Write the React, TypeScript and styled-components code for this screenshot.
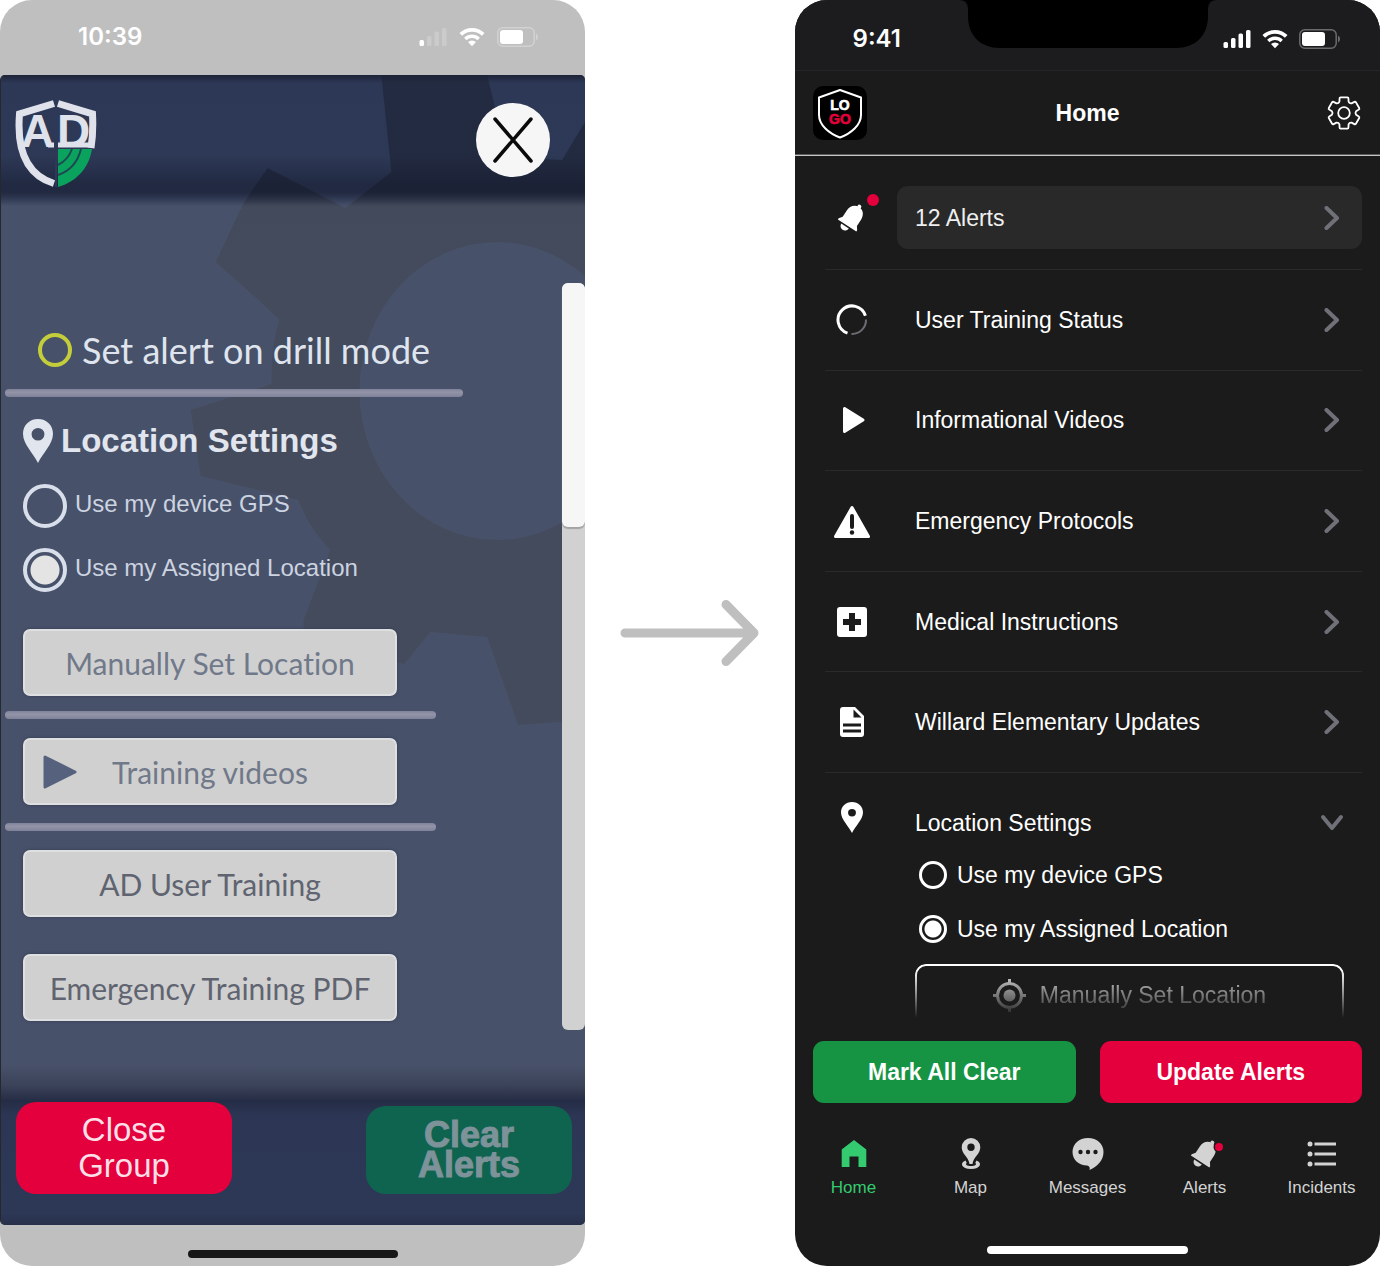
import React, { useId, useState } from 'react';
import styled, { createGlobalStyle, css } from 'styled-components';

const sans = '"Liberation Sans", Arial, Helvetica, sans-serif';
const geometric = 'Lato, "Liberation Sans", sans-serif';
const system = 'Inter, Roboto, sans-serif';

const GlobalStyle = createGlobalStyle`
  *, *::before, *::after { box-sizing: border-box; }
  body { margin: 0; background: #fff; font-family: ${sans}; }
  button, input { font: inherit; margin: 0; }
  button { border: 0; padding: 0; background: none; color: inherit; cursor: pointer; }
  svg { display: block; flex: none; }
`;

/* ---------- shared ---------- */

const Page = styled.main`
  display: grid;
  grid-template-columns: minmax(0, 1fr) 210px minmax(0, 1fr);
  min-height: 100vh;
`;

const ArrowColumn = styled.div`
  display: flex;
  align-items: center;
  justify-content: center;
`;

const Phone = styled.section<{ $bg: string; $fg: string }>`
  display: flex;
  flex-direction: column;
  overflow: hidden;
  border-radius: 32px;
  background: ${p => p.$bg};
  color: ${p => p.$fg};
`;

const Clock = styled.time`
  font: 600 24px/28px ${system};
`;

const StatusIcons = styled.div<{ $gap: number }>`
  display: flex;
  align-items: center;
  gap: ${p => p.$gap}px;
`;

const HomeIndicator = styled.div<{ $color: string; $width: number }>`
  width: ${p => p.$width}px;
  height: 8px;
  border-radius: 4px;
  background: ${p => p.$color};
  align-self: center;
`;

const Signal = ({ dim = 1 }: { dim?: number }) => (
  <svg width="28" height="20" viewBox="0 0 28 20" fill="#fff">
    <rect x="0.500" y="13" width="4.500" height="6" rx="1.500" />
    <rect x="8" y="9" width="4.500" height="10" rx="1.500" opacity={dim} />
    <rect x="15.500" y="4.500" width="4.500" height="14.500" rx="1.500" opacity={dim} />
    <rect x="23" y="1" width="4.500" height="18" rx="1.500" opacity={dim} />
  </svg>
);

const Wifi = () => (
  <svg width="26" height="20" viewBox="0 0 26 20" fill="none" stroke="#fff">
    <path d="M1.8 7.400a16 16 0 0 1 22.400 0" strokeWidth="3.800" />
    <path d="M6.300 12a9.600 9.600 0 0 1 13.400 0" strokeWidth="3.400" />
    <path d="M13 19.200l-4-4.200a5.800 5.800 0 0 1 8 0z" fill="#fff" stroke="none" />
  </svg>
);

const Battery = ({ edge }: { edge: string }) => (
  <svg width="42" height="20" viewBox="0 0 42 20">
    <rect x="0.800" y="0.800" width="36.400" height="18.400" rx="5" fill="none" stroke={edge} strokeWidth="1.500" />
    <rect x="3" y="3" width="23" height="14" rx="3" fill="#fff" />
    <path d="M39 6.500v7a4 4 0 0 0 0-7z" fill={edge} />
  </svg>
);

/* ---------- first phone ---------- */

const OldStatus = styled.header`
  display: flex;
  align-items: center;
  justify-content: space-between;
  height: 75px;
  padding: 0 46px 2px 78px;
`;

const OldScreen = styled.div`
  position: relative;
  display: flex;
  flex: 1;
  flex-direction: column;
  overflow: hidden;
  border-left: 1px solid #26282f;
  border-radius: 5px;
  background: #475169;
  isolation: isolate;
`;

const Backdrop = styled.svg`
  position: absolute;
  inset: 0;
  z-index: -1;
  width: 100%;
  height: 100%;
`;

const OldHeader = styled.header`
  display: flex;
  align-items: flex-start;
  justify-content: space-between;
  height: 130px;
  padding: 24px 35px 0 14px;
  background: linear-gradient(rgba(28, 34, 52, 0.9), rgba(28, 34, 52, 0) 8px, rgba(20, 26, 44, 0) 80px, rgba(20, 26, 44, 0.5) 110px, rgba(20, 26, 44, 0.5) 118px, rgba(20, 26, 44, 0) 130px);
`;

const CloseButton = styled.button`
  display: grid;
  place-items: center;
  width: 74px;
  height: 74px;
  margin-top: 4px;
  border-radius: 50%;
  background: #f6f6f6;
`;

const OldBody = styled.div`
  display: flex;
  flex: 1;
  align-items: flex-start;
  justify-content: space-between;
  padding-top: 78px;
`;

const OldContent = styled.div`
  display: flex;
  flex: 1;
  flex-direction: column;
  padding: 46px 24px 0 4px;
`;

const DrillOption = styled.label`
  display: flex;
  align-items: center;
  gap: 10px;
  height: 42px;
  padding-left: 33px;
  color: #dfe4ee;
  font: 400 36px/42px ${geometric};
  font-variant-ligatures: none;
`;

const DrillBox = styled.input`
  appearance: none;
  width: 34px;
  height: 34px;
  margin: 0;
  border: 4px solid #c3ce3a;
  border-radius: 50%;
`;

const OldRule = styled.hr<{ $width: number; $gap: number }>`
  width: ${p => p.$width}px;
  max-width: 100%;
  height: 8px;
  margin: ${p => p.$gap}px 0 0;
  border: 0;
  border-radius: 4px;
  background: linear-gradient(#7f829a, #9394a8 40%, #80829a);
`;

const OldHeading = styled.h2`
  display: flex;
  align-items: center;
  gap: 8px;
  height: 44px;
  margin: 22px 0 0;
  padding-left: 18px;
  color: #e1e5ee;
  font: 700 33px/44px ${sans};
`;

const OldRadios = styled.div`
  display: flex;
  flex-direction: column;
  gap: 20px;
  margin: 21px 0 37px;
  padding-left: 18px;
`;

const OldRadioLabel = styled.label`
  display: flex;
  align-items: flex-start;
  gap: 8px;
  color: #ccd3e1;
  font: 400 24px/40px ${sans};
`;

const OldRadio = styled.input`
  appearance: none;
  width: 44px;
  height: 44px;
  margin: 0;
  border: 4px solid #d8deea;
  border-radius: 50%;
  &:checked {
    background: radial-gradient(circle, #e4e4e4 14px, transparent 15px);
  }
`;

const OldButton = styled.button<{ $gap?: number; $dark?: boolean; $icon?: boolean }>`
  display: grid;
  grid-template-columns: ${p => (p.$icon ? '34px 1fr 34px' : '1fr')};
  align-items: center;
  justify-items: center;
  width: 374px;
  max-width: 100%;
  height: 67px;
  margin: ${p => p.$gap ?? 0}px 0 0 18px;
  padding: 0 18px;
  border: 2px solid #dedfe0;
  border-radius: 7px;
  background: #d0d0d0;
  box-shadow: 0 0 3px #333b50;
  color: ${p => (p.$dark ? '#5f6470' : '#70798a')};
  font: 400 30px/36px ${geometric};
  font-variant-ligatures: none;
  white-space: nowrap;
`;

const ScrollTrack = styled.div`
  width: 23px;
  height: 747px;
  border-radius: 6px;
  background: #d1d1d2;
`;

const ScrollThumb = styled.div`
  height: 244px;
  border-radius: 6px;
  background: #f6f6f7;
  box-shadow: 0 2px 1px #a3a3a6;
`;

const OldFooter = styled.footer`
  display: flex;
  align-items: flex-end;
  justify-content: space-between;
  height: 160px;
  padding: 0 13px 31px 15px;
  background: linear-gradient(rgba(37, 44, 67, 0), #3b4359 20px, #252c45 36px, #2c3654 50px, #2d3857 148px, #272f49);
`;

const FooterButton = styled.button<{ $muted?: boolean }>`
  border-radius: 20px;
  color: #fcdfe7;
  width: 216px;
  height: 92px;
  background: #e4003c;
  font: 400 33px/36px ${sans};
  ${p =>
    p.$muted &&
    css`
      width: 206px;
      height: 88px;
      background: #0f6450;
      color: #7d9299;
      font: 700 36px/30px ${sans};
      -webkit-text-stroke: 1px #7d9299;
    `}
`;

const FooterLine = styled.span`
  display: block;
`;

const OldHomeArea = styled.div`
  display: flex;
  flex-direction: column;
  justify-content: center;
  height: 41px;
  padding-top: 16px;
`;

const GearBackdrop = () => (
  <Backdrop viewBox="0 75 585 1150" preserveAspectRatio="none" aria-hidden="true">
    <defs>
      <linearGradient id="headerTone" gradientUnits="userSpaceOnUse" x1="0" y1="75" x2="0" y2="275">
        <stop offset="0" stopColor="#2d3856" />
        <stop offset="0.580" stopColor="#2e3957" />
        <stop offset="0.660" stopColor="#475169" />
      </linearGradient>
      <linearGradient id="gearTone" gradientUnits="userSpaceOnUse" x1="0" y1="75" x2="0" y2="275">
        <stop offset="0" stopColor="#232b42" />
        <stop offset="0.580" stopColor="#222a40" />
        <stop offset="0.660" stopColor="#434a5b" />
        <stop offset="1" stopColor="#444b5d" />
      </linearGradient>
    </defs>
    <rect x="0" y="75" width="585" height="200" fill="url(#headerTone)" />
    <path
      fill="url(#gearTone)"
      d="M381 75H487L495 108 520 158 562 160 585 122V720L518 725 487 637 430 632 404 664 303 640 303 620 330 550Q308 528 298 500L200 476 190 410 271 384Q270 345 279 320L258 300 215 262 243 203 267 168 345 208 391 172Z"
    />
    <ellipse cx="497" cy="391" rx="138" ry="149" fill="#475169" />
  </Backdrop>
);

const ShieldLogo = () => (
  <svg width="82" height="90" viewBox="0 0 82 90" role="img" aria-label="AD">
    <path d="M43 50H77C74 68 63 82 43 88Z" fill="#0aa35e" />
    <path d="M43 66Q53 61 57 50M43 76Q61 70 66 50" fill="none" stroke="#1d4a52" strokeWidth="2" />
    <path d="M39 4.500 4.500 15C2 46 9 75 39 84.500" fill="none" stroke="#dfe2ea" strokeWidth="7" />
    <path d="M43 4.500 77.500 15Q78.500 34 76 49" fill="none" stroke="#dfe2ea" strokeWidth="7" />
    <path d="M39 46H33M43 46H77" fill="none" stroke="#dfe2ea" strokeWidth="5" />
    <g fill="#dfe2ea" fontFamily={sans} fontWeight="700" fontSize="46">
      <text x="6" y="48">A</text>
      <text x="42" y="48">D</text>
    </g>
    <path d="M41 1V88" stroke="#2e3957" strokeWidth="2" />
  </svg>
);

const PinShape = ({ width, height, fill, hole }: { width: number; height: number; fill: string; hole: number }) => (
  <svg width={width} height={height} viewBox="0 0 28 42" preserveAspectRatio="none" fill={fill} aria-hidden="true">
    <path
      fillRule="evenodd"
      d={`M14 0C6 0 0 6 0 14C0 24 10 33 14 42C18 33 28 24 28 14C28 6 22 0 14 0ZM${14 - hole} 14.500a${hole} ${hole} 0 1 1 ${hole * 2} 0a${hole} ${hole} 0 1 1 ${-hole * 2} 0Z`}
    />
  </svg>
);

function OldPhone() {
  const [place, setPlace] = useState('assigned');
  const group = useId();
  return (
    <Phone $bg="#bfbfbf" $fg="#fff">
      <OldStatus>
        <Clock>10:39</Clock>
        <StatusIcons $gap={12}>
          <Signal dim={0.2} />
          <Wifi />
          <Battery edge="#d2d2d2" />
        </StatusIcons>
      </OldStatus>
      <OldScreen>
        <GearBackdrop />
        <OldHeader>
          <ShieldLogo />
          <CloseButton aria-label="Close">
            <svg width="40" height="46" viewBox="0 0 40 46" stroke="#0b0b0b" strokeWidth="3.500" strokeLinecap="round">
              <path d="M2 2 38 44M38 2 2 44" />
            </svg>
          </CloseButton>
        </OldHeader>
        <OldBody>
          <OldContent>
            <DrillOption>
              <DrillBox type="checkbox" />
              Set alert on drill mode
            </DrillOption>
            <OldRule $width={458} $gap={18} />
            <OldHeading>
              <PinShape width={30} height={44} fill="#e1e5ee" hole={6} />
              Location Settings
            </OldHeading>
            <OldRadios>
              <OldRadioLabel>
                <OldRadio type="radio" name={group} checked={place === 'gps'} onChange={() => setPlace('gps')} />
                Use my device GPS
              </OldRadioLabel>
              <OldRadioLabel>
                <OldRadio type="radio" name={group} checked={place === 'assigned'} onChange={() => setPlace('assigned')} />
                Use my Assigned Location
              </OldRadioLabel>
            </OldRadios>
            <OldButton>Manually Set Location</OldButton>
            <OldRule $width={431} $gap={15} />
            <OldButton $gap={19} $icon>
              <svg width="34" height="34" viewBox="0 0 34 34" fill="#56627d" stroke="#56627d" strokeWidth="3" strokeLinejoin="round">
                <path d="M2 2 32 17 2 32Z" />
              </svg>
              Training videos
            </OldButton>
            <OldRule $width={431} $gap={18} />
            <OldButton $gap={19} $dark>AD User Training</OldButton>
            <OldButton $gap={37} $dark>Emergency Training PDF</OldButton>
          </OldContent>
          <ScrollTrack>
            <ScrollThumb />
          </ScrollTrack>
        </OldBody>
        <OldFooter>
          <FooterButton>
            <FooterLine>Close</FooterLine>
            <FooterLine>Group</FooterLine>
          </FooterButton>
          <FooterButton $muted>
            <FooterLine>Clear</FooterLine>
            <FooterLine>Alerts</FooterLine>
          </FooterButton>
        </OldFooter>
      </OldScreen>
      <OldHomeArea>
        <HomeIndicator $color="#161616" $width={210} />
      </OldHomeArea>
    </Phone>
  );
}

/* ---------- second phone ---------- */

const NewStatus = styled.header`
  display: grid;
  grid-template-columns: 1fr 258px 1fr;
  height: 71px;
  border-bottom: 1px solid #262628;
  background: #1c1c1e;
`;

const StatusSide = styled.div<{ $end?: boolean }>`
  display: flex;
  align-items: center;
  justify-content: ${p => (p.$end ? 'flex-end' : 'center')};
  height: 78px;
  padding-right: ${p => (p.$end ? 39 : 0)}px;
`;

const NewHeader = styled.header`
  display: grid;
  grid-template-columns: 54px 1fr 54px;
  align-items: center;
  height: 85px;
  padding: 0 18px;
  border-bottom: 1px solid #c6c6c6;
  box-shadow: inset 0 -1px #5c5c5c;
`;

const Title = styled.h1`
  margin: 0;
  text-align: center;
  font: 700 23px/28px ${sans};
`;

const IconButton = styled.button`
  justify-self: end;
`;

const NewMain = styled.div`
  display: flex;
  flex-direction: column;
  padding: 0 18px 0 30px;
`;

const IconCell = styled.span`
  position: relative;
  display: grid;
  place-items: center;
  flex: none;
  width: 54px;
  height: 32px;
`;

const AlertsRow = styled.div`
  display: flex;
  align-items: center;
  gap: 18px;
  padding: 30px 0 20px;
`;

const AlertDot = styled.span`
  position: absolute;
  top: -8px;
  right: 0;
  width: 12px;
  height: 12px;
  border-radius: 50%;
  background: #e4003c;
`;

const AlertsButton = styled.button`
  display: flex;
  flex: 1;
  align-items: center;
  justify-content: space-between;
  height: 63px;
  padding: 0 18px;
  border-radius: 11px;
  background: #292929;
  color: #efefef;
  font: 400 23px/28px ${sans};
`;

const MenuList = styled.ul`
  display: flex;
  flex-direction: column;
  min-height: 504px;
  margin: 0;
  padding: 0;
  list-style: none;
  border-top: 1px solid #2a2a2a;
`;

const MenuItem = styled.li`
  display: flex;
  flex: 1;
  border-bottom: 1px solid #2a2a2a;
`;

const MenuButton = styled.button`
  display: flex;
  flex: 1;
  align-items: center;
  gap: 36px;
  padding-right: 18px;
  text-align: left;
  font: 400 23px/44px ${sans};
`;

const MenuLabel = styled.span`
  flex: 1;
`;

const ChevronCell = styled.span`
  display: grid;
  place-items: center;
  width: 24px;
  height: 44px;
`;

const LocationToggle = styled(MenuButton)`
  flex: none;
  align-items: flex-start;
  padding-top: 28px;
`;

const LocationPanel = styled.div`
  display: flex;
  flex-direction: column;
  gap: 24px;
  padding: 15px 18px 0 90px;
`;

const RadioLabel = styled.label`
  display: flex;
  align-items: center;
  gap: 10px;
  padding-left: 4px;
  font: 400 23px/30px ${sans};
`;

const Radio = styled.input`
  appearance: none;
  width: 28px;
  height: 28px;
  margin: 0;
  border: 3px solid #fff;
  border-radius: 50%;
  &:checked {
    background: radial-gradient(circle, #fff 8px, transparent 9px);
  }
`;

const SetLocationButton = styled.button`
  display: flex;
  align-items: center;
  justify-content: center;
  gap: 14px;
  height: 62px;
  margin-top: -4px;
  border: 2px solid #fff;
  border-radius: 11px;
  color: #e0e0e0;
  font: 400 23px/28px ${sans};
  mask-image: linear-gradient(#000 6px, transparent 54px);
`;

const Actions = styled.div`
  display: grid;
  grid-template-columns: 1fr 1fr;
  gap: 24px;
  padding: 15px 18px 35px;
`;

const ActionButton = styled.button<{ $bg: string }>`
  height: 62px;
  border-radius: 11px;
  background: ${p => p.$bg};
  font: 700 23px/28px ${sans};
`;

const TabBar = styled.nav`
  display: grid;
  grid-template-columns: repeat(5, 1fr);
  padding-bottom: 48px;
`;

const Tab = styled.a<{ $active?: boolean }>`
  display: flex;
  flex-direction: column;
  align-items: center;
  gap: 8px;
  color: ${p => (p.$active ? '#34cb70' : '#d3d3d3')};
  font: 400 17px/20px ${sans};
  text-decoration: none;
`;

const NewHomeArea = styled.div`
  display: flex;
  flex-direction: column;
  padding-bottom: 12px;
`;

const Notch = () => (
  <svg width="258" height="48" viewBox="0 0 258 48" aria-hidden="true">
    <path d="M0 0H258Q249 0 249 9V16C249 36 236 48 217 48H41C22 48 9 36 9 16V9Q9 0 0 0Z" fill="#000" />
  </svg>
);

const AppLogo = () => (
  <svg width="54" height="54" viewBox="0 0 54 54">
    <rect width="54" height="54" rx="10" fill="#000" />
    <path d="M27 4 48 11.500V29C48 39 38 47.500 27 51.500C16 47.500 6 39 6 29V11.500Z" fill="none" stroke="#fff" strokeWidth="2" strokeLinejoin="round" />
    <g fontFamily={sans} fontWeight="700" fontSize="14" strokeWidth="0.600" textAnchor="middle">
      <text x="27" y="24" fill="#fff" stroke="#fff">LO</text>
      <text x="27" y="38" fill="#e4003c" stroke="#e4003c">GO</text>
    </g>
  </svg>
);

const gearPath = (() => {
  const at = (deg: number, r: number) => {
    const a = (deg * Math.PI) / 180;
    return `${(17 + r * Math.cos(a)).toFixed(2)} ${(17 + r * Math.sin(a)).toFixed(2)}`;
  };
  let d = '';
  for (let k = 0; k < 6; k += 1) {
    const c = -90 + k * 60;
    d += `${k ? 'L' : 'M'}${at(c - 22, 12.2)}L${at(c - 17, 15.2)}Q${at(c - 16, 16.2)} ${at(c - 12, 16)}L${at(c + 12, 16)}Q${at(c + 16, 16.2)} ${at(c + 17, 15.2)}L${at(c + 22, 12.2)}Q${at(c + 30, 10.8)} ${at(c + 38, 12.2)}`;
  }
  return `${d}Z`;
})();

const GearIcon = () => (
  <svg width="36" height="34" viewBox="-1 0 36 34" fill="none" stroke="#fff" strokeWidth="1.800" strokeLinejoin="round">
    <path d={gearPath} />
    <circle cx="17" cy="17" r="5.800" />
  </svg>
);

const BellShape = ({ fill }: { fill: string }) => (
  <g transform="rotate(33 16 16)" fill={fill}>
    <circle cx="16" cy="2.500" r="2" />
    <path d="M16 3C10.500 3 7.500 7.500 7.500 12.500V20L5 23.500V25H27V23.500L24.500 20V12.500C24.500 7.500 21.500 3 16 3Z" />
    <path d="M10 26.500H19A4.500 4.500 0 0 1 10 26.500Z" />
  </g>
);

const Bell = () => (
  <svg width="32" height="32" viewBox="0 0 32 32" aria-hidden="true">
    <BellShape fill="#fff" />
  </svg>
);

const Chevron = ({ down }: { down?: boolean }) => (
  <svg width="24" height="24" viewBox="0 0 24 24" fill="none" stroke="#707079" strokeWidth="4" strokeLinecap="round" strokeLinejoin="round">
    <path d={down ? 'M3 6 12 17 21 6' : 'M6.500 2 17 12 6.500 22'} />
  </svg>
);

const Progress = () => (
  <svg width="32" height="32" viewBox="0 0 32 32" fill="none" strokeWidth="3">
    <path d="M11.500 29.200A14 14 0 1 1 29.400 11.800" stroke="#fff" />
    <path d="M30 15.500A14 14 0 0 1 15.500 30" stroke="#6c6c74" strokeWidth="2" />
  </svg>
);

const Play = () => (
  <svg width="32" height="32" viewBox="0 0 32 32" fill="#fff" stroke="#fff" strokeWidth="3" strokeLinejoin="round">
    <path d="M8.500 4.500V27.500L27 16Z" />
  </svg>
);

const Warning = () => (
  <svg width="38" height="34" viewBox="0 0 38 34">
    <path d="M19 2.500 35.500 31.500H2.500Z" fill="#fff" stroke="#fff" strokeWidth="3" strokeLinejoin="round" />
    <path d="M19 11V22" stroke="#1b1b1b" strokeWidth="4" strokeLinecap="round" />
    <circle cx="19" cy="27.500" r="2.200" fill="#1b1b1b" />
  </svg>
);

const Medical = () => (
  <svg width="30" height="30" viewBox="0 0 30 30">
    <rect width="30" height="30" rx="3" fill="#fff" />
    <path d="M12 6H18V12H24V18H18V24H12V18H6V12H12Z" fill="#1b1b1b" />
  </svg>
);

const Document = () => (
  <svg width="24" height="30" viewBox="0 0 24 30">
    <path d="M3 0H15L24 9V27Q24 30 21 30H3Q0 30 0 27V3Q0 0 3 0Z" fill="#fff" />
    <path d="M13.500 2.500V10.500H21.500ZM3 16.500H21V19.500H3ZM3 22.500H21V25.500H3Z" fill="#1b1b1b" />
  </svg>
);

const Target = () => (
  <svg width="33" height="33" viewBox="0 0 33 33" fill="none" stroke="currentColor" strokeWidth="3">
    <circle cx="16.500" cy="16.500" r="12" />
    <circle cx="16.500" cy="16.500" r="6" fill="currentColor" stroke="none" />
    <path d="M16.500 0V4M16.500 29V33M0 16.500H4M29 16.500H33" />
  </svg>
);

const HomeGlyph = () => (
  <svg width="32" height="32" viewBox="0 0 32 32" fill="currentColor">
    <path d="M16 2 28.300 11.500V29H20.500V18.500H11.500V29H3.700V11.500Z" />
  </svg>
);

const MapGlyph = () => (
  <svg width="32" height="32" viewBox="0 0 32 32" fill="currentColor">
    <path d="M10.500 22.500C4.500 24.500 6 31 16 31C26 31 27.500 24.500 21.500 22.500L20.200 25C22.500 26.500 20 28 16 28C12 28 9.500 26.500 11.800 25Z" />
    <path fillRule="evenodd" d="M16 0A9.300 9.300 0 0 0 6.700 9.300C6.700 16 13.500 19 14.500 26H17.500C18.500 19 25.300 16 25.300 9.300A9.300 9.300 0 0 0 16 0ZM16 5.500A3.700 3.700 0 1 1 16 12.900A3.700 3.700 0 1 1 16 5.500Z" />
  </svg>
);

const ChatGlyph = () => (
  <svg width="32" height="32" viewBox="0 0 32 32">
    <path d="M16 0C7 0 0.500 6 0.500 14C0.500 22 7 27.300 15 27.500Q18.500 28 17.500 32C26 28 31.500 22 31.500 14C31.500 6 25 0 16 0Z" fill="currentColor" />
    <g fill="#1b1b1b">
      <circle cx="8.500" cy="14" r="2.200" />
      <circle cx="16" cy="14" r="2.200" />
      <circle cx="23.500" cy="14" r="2.200" />
    </g>
  </svg>
);

const AlertGlyph = () => (
  <svg width="36" height="32" viewBox="-2 0 36 32">
    <BellShape fill="currentColor" />
    <circle cx="30" cy="9" r="5.500" fill="#1b1b1b" />
    <circle cx="30" cy="9" r="4" fill="#e4003c" />
  </svg>
);

const ListGlyph = () => (
  <svg width="32" height="32" viewBox="0 0 32 32" fill="currentColor">
    {[6, 16, 26].map(y => (
      <g key={y}>
        <circle cx="4" cy={y} r="2.500" />
        <path d={`M8.500 ${y - 1.5}H30V${y + 1.5}H8.500Z`} />
      </g>
    ))}
  </svg>
);

const menu = [
  { label: 'User Training Status', icon: <Progress /> },
  { label: 'Informational Videos', icon: <Play /> },
  { label: 'Emergency Protocols', icon: <Warning /> },
  { label: 'Medical Instructions', icon: <Medical /> },
  { label: 'Willard Elementary Updates', icon: <Document /> },
];

const tabs = [
  { label: 'Home', icon: <HomeGlyph /> },
  { label: 'Map', icon: <MapGlyph /> },
  { label: 'Messages', icon: <ChatGlyph /> },
  { label: 'Alerts', icon: <AlertGlyph /> },
  { label: 'Incidents', icon: <ListGlyph /> },
];

function NewPhone() {
  const [place, setPlace] = useState('assigned');
  const group = useId();
  return (
    <Phone $bg="#1b1b1b" $fg="#fff">
      <NewStatus>
        <StatusSide>
          <Clock>9:41</Clock>
        </StatusSide>
        <Notch />
        <StatusSide $end>
          <StatusIcons $gap={11}>
            <Signal />
            <Wifi />
            <Battery edge="#6b6b6d" />
          </StatusIcons>
        </StatusSide>
      </NewStatus>
      <NewHeader>
        <AppLogo />
        <Title>Home</Title>
        <IconButton aria-label="Settings">
          <GearIcon />
        </IconButton>
      </NewHeader>
      <NewMain>
        <AlertsRow>
          <IconCell>
            <Bell />
            <AlertDot />
          </IconCell>
          <AlertsButton>
            12 Alerts
            <Chevron />
          </AlertsButton>
        </AlertsRow>
        <MenuList>
          {menu.map(item => (
            <MenuItem key={item.label}>
              <MenuButton>
                <IconCell>{item.icon}</IconCell>
                <MenuLabel>{item.label}</MenuLabel>
                <ChevronCell>
                  <Chevron />
                </ChevronCell>
              </MenuButton>
            </MenuItem>
          ))}
        </MenuList>
        <LocationToggle aria-expanded="true">
          <IconCell>
            <PinShape width={22} height={31} fill="#fff" hole={5} />
          </IconCell>
          <MenuLabel>Location Settings</MenuLabel>
          <ChevronCell>
            <Chevron down />
          </ChevronCell>
        </LocationToggle>
        <LocationPanel>
          <RadioLabel>
            <Radio type="radio" name={group} checked={place === 'gps'} onChange={() => setPlace('gps')} />
            Use my device GPS
          </RadioLabel>
          <RadioLabel>
            <Radio type="radio" name={group} checked={place === 'assigned'} onChange={() => setPlace('assigned')} />
            Use my Assigned Location
          </RadioLabel>
          <SetLocationButton>
            <Target />
            Manually Set Location
          </SetLocationButton>
        </LocationPanel>
      </NewMain>
      <Actions>
        <ActionButton $bg="#169444">Mark All Clear</ActionButton>
        <ActionButton $bg="#e4003c">Update Alerts</ActionButton>
      </Actions>
      <TabBar>
        {tabs.map((tab, i) => (
          <Tab key={tab.label} href="#" $active={i === 0}>
            {tab.icon}
            {tab.label}
          </Tab>
        ))}
      </TabBar>
      <NewHomeArea>
        <HomeIndicator $color="#fff" $width={201} />
      </NewHomeArea>
    </Phone>
  );
}

export default function App() {
  return (
    <>
      <GlobalStyle />
      <Page>
        <OldPhone />
        <ArrowColumn>
          <svg width="140" height="68" viewBox="0 0 140 68" fill="none" stroke="#bfbfbf" strokeWidth="9" strokeLinecap="round" strokeLinejoin="round" aria-hidden="true">
            <path d="M5 34H134M106 5.500 134 34 106 62.500" />
          </svg>
        </ArrowColumn>
        <NewPhone />
      </Page>
    </>
  );
}
